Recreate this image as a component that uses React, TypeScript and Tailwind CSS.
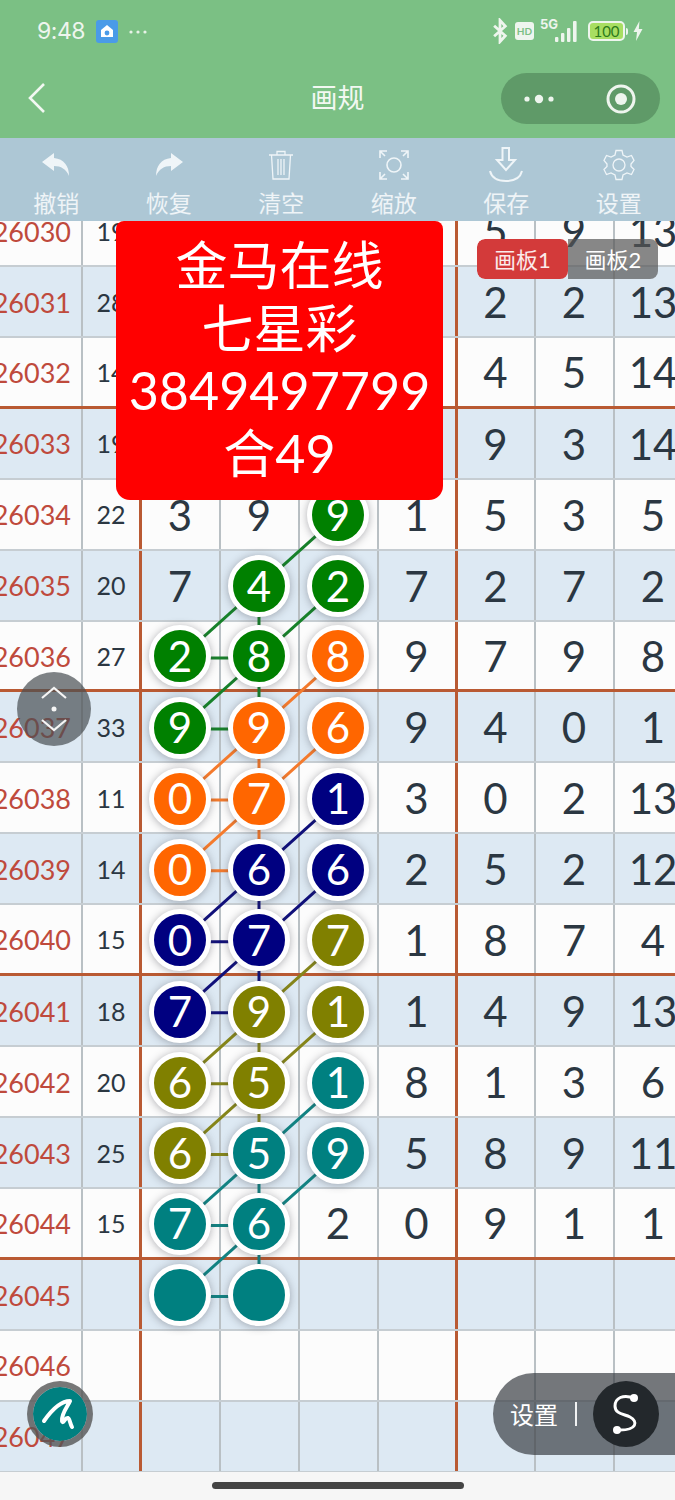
import React from "react";

type C = "g" | "o" | "n" | "l" | "t";
type Cell = string | [string, C];
const FILL: Record<C, string> = { g: "bg-[#008000]", o: "bg-[#ff6600]", n: "bg-[#000080]", l: "bg-[#808000]", t: "bg-[#008080]" };
const STROKE: Record<C, string> = { g: "#17812a", o: "#f47a2c", n: "#10107a", l: "#85851a", t: "#128282" };

const ROWS: { id: string; sum: string; cells: Cell[] }[] = [
  { id: "26030", sum: "19", cells: ["", "", "", "", "5", "9", "13"] },
  { id: "26031", sum: "28", cells: ["", "", "", "", "2", "2", "13"] },
  { id: "26032", sum: "14", cells: ["", "", "", "", "4", "5", "14"] },
  { id: "26033", sum: "19", cells: ["", "", "", "", "9", "3", "14"] },
  { id: "26034", sum: "22", cells: ["3", "9", ["9", "g"], "1", "5", "3", "5"] },
  { id: "26035", sum: "20", cells: ["7", ["4", "g"], ["2", "g"], "7", "2", "7", "2"] },
  { id: "26036", sum: "27", cells: [["2", "g"], ["8", "g"], ["8", "o"], "9", "7", "9", "8"] },
  { id: "26037", sum: "33", cells: [["9", "g"], ["9", "o"], ["6", "o"], "9", "4", "0", "1"] },
  { id: "26038", sum: "11", cells: [["0", "o"], ["7", "o"], ["1", "n"], "3", "0", "2", "13"] },
  { id: "26039", sum: "14", cells: [["0", "o"], ["6", "n"], ["6", "n"], "2", "5", "2", "12"] },
  { id: "26040", sum: "15", cells: [["0", "n"], ["7", "n"], ["7", "l"], "1", "8", "7", "4"] },
  { id: "26041", sum: "18", cells: [["7", "n"], ["9", "l"], ["1", "l"], "1", "4", "9", "13"] },
  { id: "26042", sum: "20", cells: [["6", "l"], ["5", "l"], ["1", "t"], "8", "1", "3", "6"] },
  { id: "26043", sum: "25", cells: [["6", "l"], ["5", "t"], ["9", "t"], "5", "8", "9", "11"] },
  { id: "26044", sum: "15", cells: [["7", "t"], ["6", "t"], "2", "0", "9", "1", "1"] },
  { id: "26045", sum: "", cells: [["", "t"], ["", "t"], "", "", "", "", ""] },
  { id: "26046", sum: "", cells: ["", "", "", "", "", "", ""] },
  { id: "26047", sum: "", cells: ["", "", "", "", "", "", ""] },
];

const ROW_H = 70.93;
const X = [180, 259, 338];
const yOf = (i: number) => ROW_H * (i + 0.5) + 1;

function Links() {
  const groups: [number, C][] = [[4, "g"], [6, "o"], [8, "n"], [10, "l"], [12, "t"]];
  const seg = (r: number): [number, number, number, number][] => [
    [r, 2, r + 1, 1],
    [r + 1, 2, r + 2, 1],
    [r + 1, 1, r + 2, 1],
    [r + 1, 1, r + 2, 0],
    [r + 2, 1, r + 3, 0],
    [r + 2, 0, r + 2, 1],
    [r + 2, 1, r + 3, 1],
    [r + 3, 0, r + 3, 1],
  ];
  return (
    <svg className="absolute left-0 top-0 w-[675px] h-[1277px]" viewBox="0 0 675 1277">
      {groups.map(([r, c]) =>
        seg(r).map(([a, b, d, e], k) => (
          <line key={r + "-" + k} x1={X[b]} y1={yOf(a)} x2={X[e]} y2={yOf(d)} stroke={STROKE[c]} strokeWidth={3} />
        ))
      )}
    </svg>
  );
}

function TableCell({ cell, edge }: { cell: Cell; edge: boolean }) {
  const border = edge ? "border-r-[3px] border-r-[#b95a33]" : "border-r-2 border-r-[#b9c0c4]";
  if (typeof cell === "string") {
    return <div className={`flex items-center justify-center pt-[2px] pr-[1px] text-[42px] text-[#2b3742] ${border}`}>{cell}</div>;
  }
  return (
    <div className={`flex items-center justify-center pt-[2px] pr-[1px] ${border}`}>
      <div
        className={`relative z-10 flex shrink-0 items-center justify-center w-[62px] h-[62px] rounded-full border-[5px] border-white text-[42px] text-white shadow-[0_1px_8px_rgba(60,60,70,0.4)] ${FILL[cell[1]]}`}
      >
        {cell[0]}
      </div>
    </div>
  );
}

function Tool({ label, children }: { label: string; children: React.ReactNode }) {
  return (
    <div className="flex flex-col items-center">
      <div className="h-[44px] w-[44px] flex items-center justify-center">{children}</div>
      <div className="text-[23px] leading-[30px] text-white/80">{label}</div>
    </div>
  );
}

export default function App() {
  return (
    <div className="relative w-[675px] h-[1500px] overflow-hidden bg-[#f6f6f6] flex flex-col font-['Lato','Noto_Sans_CJK_SC',sans-serif]">
      {/* status + nav */}
      <div className="h-[138px] shrink-0 bg-[#7bc084] flex flex-col">
        <div className="h-[62px] pl-[37px] pr-[32px] pt-[19px] flex items-start text-[#eef5ee]">
          <span className="text-[23px] leading-[24px] font-['Inter',sans-serif] tracking-[-0.5px]">9:48</span>
          <svg className="ml-[11px] mt-[1px]" width="22" height="23" viewBox="0 0 22 23">
            <rect width="22" height="23" rx="3" fill="#4a9be8" />
            <path d="M11 5 L17 10 V17 H5 V10 Z" fill="#fff" />
            <circle cx="11" cy="13" r="2.4" fill="#4a9be8" />
          </svg>
          <svg className="ml-[10px] mt-[11px]" width="20" height="4" viewBox="0 0 20 4">
            <circle cx="3" cy="2" r="1.6" fill="#e8f2e8" />
            <circle cx="10" cy="2" r="1.6" fill="#e8f2e8" />
            <circle cx="17" cy="2" r="1.6" fill="#e8f2e8" />
          </svg>
          <div className="ml-auto flex items-center h-[24px]">
            <svg width="16" height="26" viewBox="0 0 15 24" fill="none" stroke="#eef5ee" strokeWidth="2.6">
              <path d="M2 7 L12.5 16.5 L7.5 22 V2 L12.5 7.5 L2 17" />
            </svg>
            <div className="ml-[7px] w-[19px] h-[18px] rounded-[3px] bg-[#eef5ee] flex items-center justify-center text-[10px] font-bold text-[#7bc084]">HD</div>
            <svg className="ml-[6px]" width="42" height="26" viewBox="0 0 42 26" fill="#eef5ee">
              <text x="0" y="11" fontSize="13" fontWeight="700" fontFamily="Inter">5G</text>
              <rect x="15" y="19" width="3.4" height="5" rx="1" />
              <rect x="21" y="15" width="3.4" height="9" rx="1" />
              <rect x="27" y="10" width="3.4" height="14" rx="1" />
              <rect x="33" y="3" width="3.6" height="21" rx="1" />
            </svg>
            <div className="ml-[6px] w-[37px] h-[20px] rounded-[5px] border-2 border-[#eef5ee] bg-[#a8de62] flex items-center justify-center text-[15px] leading-none text-[#2c7a1a]">100</div>
            <div className="ml-[1px] w-[2px] h-[7px] rounded-r bg-[#eef5ee]" />
            <svg className="ml-[5px]" width="10" height="20" viewBox="0 0 10 20" fill="#eef5ee">
              <path d="M6.5 0 L0.5 11 H4 L3 20 L9.5 8 H5.8 Z" />
            </svg>
          </div>
        </div>
        <div className="flex-1 relative flex items-center justify-center">
          <svg className="absolute left-[28px] top-[20px]" width="18" height="32" viewBox="0 0 18 32" fill="none" stroke="#f2f8f2" strokeWidth="2.6">
            <path d="M16 2 L2 16 L16 30" />
          </svg>
          <span className="text-[27px] text-[#f2f8f2] -mt-[6px] font-['Noto_Sans_CJK_SC',sans-serif]">画规</span>
          <div className="absolute left-[501px] top-[11px] w-[159px] h-[51px] rounded-full bg-[#5f9a68] flex items-center">
            <svg className="ml-[22px]" width="34" height="12" viewBox="0 0 34 12" fill="#eef5ee">
              <circle cx="4" cy="6" r="2.6" />
              <circle cx="16" cy="6" r="4.2" />
              <circle cx="28" cy="6" r="2.6" />
            </svg>
            <svg className="ml-[49px]" width="30" height="30" viewBox="0 0 30 30" fill="none">
              <circle cx="15" cy="15" r="13" stroke="#eef5ee" strokeWidth="3" />
              <circle cx="15" cy="15" r="6" fill="#eef5ee" />
            </svg>
          </div>
        </div>
      </div>

      {/* toolbar */}
      <div className="h-[83px] shrink-0 bg-[#adc7d5] grid grid-cols-6 pt-[5px] font-['Noto_Sans_CJK_SC',sans-serif]">
        <Tool label="撤销">
          <svg width="30" height="28" viewBox="0 0 30 28" fill="#eff5f8">
            <path d="M13 2 L1 11 L13 20 V15 C20 15 25 18 28 25 C28 15 23 8 13 7 Z" />
          </svg>
        </Tool>
        <Tool label="恢复">
          <svg width="30" height="28" viewBox="0 0 30 28" fill="#eff5f8">
            <path d="M17 2 L29 11 L17 20 V15 C10 15 5 18 2 25 C2 15 7 8 17 7 Z" />
          </svg>
        </Tool>
        <Tool label="清空">
          <svg width="26" height="32" viewBox="0 0 26 32" fill="none" stroke="#eff5f8" strokeWidth="1.3">
            <path d="M1 6 H25 M9 6 V2.5 H17 V6 M3.5 6 L5 30 H21 L22.5 6 M10 10 V26 M13 10 V26 M16 10 V26" />
          </svg>
        </Tool>
        <Tool label="缩放">
          <svg width="30" height="30" viewBox="0 0 30 30" fill="none" stroke="#eff5f8" strokeWidth="1.6">
            <circle cx="15" cy="15" r="7" />
            <path d="M1 8 V1 H8 M1 1 L6 6 M22 1 H29 V8 M29 1 L24 6 M1 22 V29 H8 M1 29 L6 24 M22 29 H29 V22 M29 29 L24 24" />
          </svg>
        </Tool>
        <Tool label="保存">
          <svg width="36" height="38" viewBox="0 0 36 38" fill="none" stroke="#eff5f8" strokeWidth="2">
            <path d="M14.5 2 H21 V14 H27 L18 24 L9 14 H14.5 Z" />
            <path d="M2 25 C4 33 11 35 18 35 C25 35 32 33 34 25" />
          </svg>
        </Tool>
        <Tool label="设置">
          <svg width="32" height="32" viewBox="0 0 32 32" fill="none" stroke="#eff5f8" strokeWidth="1.3">
            <circle cx="16" cy="16" r="6" />
            <path d="M13 1.5 H19 L20 6 L24 8 L28.5 6.5 L31 11.5 L28 15 V17.5 L31 20.5 L28.5 25.5 L24 24 L20 26 L19 30.5 H13 L12 26 L8 24 L3.5 25.5 L1 20.5 L4 17.5 V15 L1 11.5 L3.5 6.5 L8 8 L12 6 Z" />
          </svg>
        </Tool>
      </div>

      {/* table */}
      <div className="relative h-[1251px] shrink-0 overflow-hidden">
        <div className="relative -mt-[25px] w-[694px]">
          <Links />
          {ROWS.map((r, i) => {
            const bg = i % 2 === 1 ? "bg-[#dde9f3]" : "bg-[#fcfcfc]";
            const line = i % 4 === 2 ? "border-b-[3px] border-b-[#b95a33]" : "border-b-2 border-b-[#c6cdd2]";
            return (
              <div key={r.id} className={`grid grid-cols-[83px_59px_79px_79px_79px_79px_78px_79px_79px] h-[70.93px] ${bg} ${line}`}>
                <div className="flex items-center justify-end pr-[10px] pt-[3px] text-[27px] text-[#bf4a3c] border-r-2 border-r-[#b9c0c4] overflow-hidden">{r.id}</div>
                <div className="flex items-center justify-center pt-[2px] text-[25px] text-[#2b3742] border-r-[3px] border-r-[#b95a33]">{r.sum}</div>
                {r.cells.map((c, k) => (
                  <TableCell key={k} cell={c} edge={k === 3} />
                ))}
              </div>
            );
          })}
        </div>

        {/* red notice */}
        <div className="absolute z-20 left-[116px] top-0 w-[327px] h-[279px] rounded-b-[14px] rounded-t-[8px] bg-[#ff0000] text-white text-center text-[52px] leading-[62.5px] pt-[13px] font-['Lato','Noto_Sans_CJK_SC',sans-serif]">
          <div>金马在线</div>
          <div>七星彩</div>
          <div>3849497799</div>
          <div>合49</div>
        </div>

        {/* board tabs */}
        <div className="absolute z-20 left-[477px] top-[18px] w-[181px] h-[40px] rounded-[8px] overflow-hidden flex text-[22px] text-white font-['Lato','Noto_Sans_CJK_SC',sans-serif]">
          <div className="w-[91px] bg-[#d33a3a] rounded-[8px] flex items-center justify-center text-white/90">画板1</div>
          <div className="flex-1 bg-[#555]/70 flex items-center justify-center">画板2</div>
        </div>

        {/* up-down floater */}
        <div className="absolute z-20 left-[17px] top-[451px] w-[74px] h-[74px] rounded-full bg-[#494e52]/70 flex items-center justify-center">
          <svg width="36" height="50" viewBox="0 0 36 50" fill="none" stroke="#f5f5f5" strokeWidth="2.2">
            <path d="M6 14 L18 4 L30 14 M6 36 L18 46 L30 36" />
            <circle cx="18" cy="25" r="2.5" fill="#f5f5f5" stroke="none" />
          </svg>
        </div>

        {/* pen */}
        <div className="absolute z-20 left-[27px] top-[1160px] w-[66px] h-[66px] rounded-full border-[6px] border-[#555]/80 bg-[#008080] bg-clip-padding flex items-center justify-center">
          <svg width="54" height="54" viewBox="6 6 54 54" fill="none" stroke="#ffffff" strokeWidth="4" strokeLinecap="round" strokeLinejoin="round">
            <path d="M17 40 C24 30 34 20 43 20 C41 25 34 33 35 40 C36 44 38 36 41 37 C43 38 43 43 45 46" />
          </svg>
        </div>

        {/* settings pill */}
        <div className="absolute z-20 left-[493px] top-[1152px] w-[182px] h-[82px] rounded-l-[41px] bg-[#3a3f44]/70 flex items-center">
          <span className="ml-[17px] text-[24px] text-white font-['Noto_Sans_CJK_SC',sans-serif]">设置</span>
          <div className="ml-[17px] w-[2px] h-[24px] bg-white/90" />
          <div className="ml-[16px] w-[66px] h-[66px] rounded-full bg-[#23282c] flex items-center justify-center">
            <svg width="66" height="66" viewBox="0 0 66 66" fill="none" stroke="#ffffff" strokeWidth="3">
              <path d="M41 17 C30 13 22 17 22 25 C22 33 31 33 37 36 C45 40 45 50 24 49" />
              <circle cx="41" cy="17" r="4" fill="#ffffff" stroke="none" />
              <circle cx="24" cy="49" r="4" fill="#ffffff" stroke="none" />
            </svg>
          </div>
        </div>
      </div>

      {/* home bar */}
      <div className="flex-1 flex items-start justify-center pt-[10px] bg-[#f6f6f6]">
        <div className="w-[252px] h-[7px] rounded-full bg-[#444]" />
      </div>
    </div>
  );
}
